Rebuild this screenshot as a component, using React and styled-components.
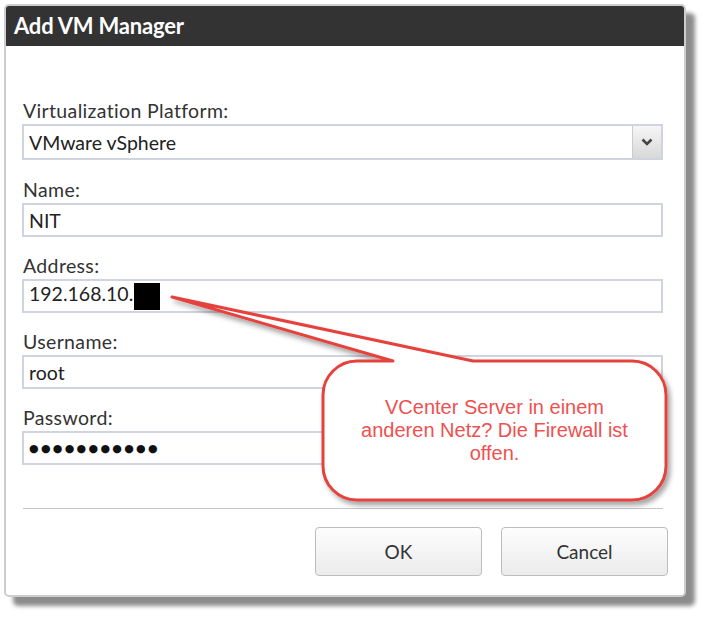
import React from "react"
import styled, { createGlobalStyle } from "styled-components"

const GlobalStyle = createGlobalStyle`
  body {
    margin: 0;
    background: #ffffff;
    font-family: Lato, "Open Sans", sans-serif;
  }
`

const Stage = styled.div`
  position: relative;
  width: 710px;
  height: 621px;
  padding: 4px 0 0 4px;
  box-sizing: border-box;
`

const Dialog = styled.div`
  width: 682px;
  height: 593px;
  box-sizing: border-box;
  border: 2px solid #cdcdcd;
  border-radius: 5px;
  background: #ffffff;
  box-shadow: 9px 9px 4px rgba(0, 0, 0, 0.45);
  display: flex;
  flex-direction: column;
  overflow: hidden;
`

const Header = styled.div`
  height: 40px;
  flex: none;
  background: #333333;
  color: #ffffff;
  font-family: Lato, sans-serif;
  font-weight: 700;
  font-size: 22px;
  line-height: 40px;
  padding-left: 8px;
  letter-spacing: -0.2px;
`

const Body = styled.div`
  padding: 52px 21px 0 16px;
`

const Field = styled.div`
  margin-bottom: ${p => (p.$first ? 17 : 16)}px;
`

const Label = styled.div`
  font-size: 19.5px;
  line-height: 22px;
  color: #333333;
  padding-top: 2px;
  margin-bottom: 2px;
  padding-left: 1px;
  letter-spacing: 0.35px;
`

const Input = styled.div`
  height: ${p => (p.$tall ? 36 : 34)}px;
  box-sizing: border-box;
  border: 2px solid #d0d3e0;
  display: flex;
  align-items: center;
  padding-left: 5px;
  font-size: 19.5px;
  color: #222222;
  background: #ffffff;
`

const Value = styled.span`
  flex: 1;
`

const Masked = styled.span`
  background: #000000;
  display: inline-block;
  width: 26px;
  height: 27px;
  vertical-align: middle;
  margin-left: 1px;
`

const Dots = styled.span`
  flex: 1;
  font-family: "DejaVu Sans", sans-serif;
  font-size: 11px;
  letter-spacing: 2.3px;
  color: #111111;
`

const DropButton = styled.div`
  width: 28px;
  align-self: stretch;
  border-left: 1px solid #c8cad6;
  background: linear-gradient(#f6f6f6, #d8d8d8);
  display: flex;
  align-items: center;
  justify-content: center;
`

const Separator = styled.div`
  margin: 27px 21px 0 17px;
  border-top: 1px solid #cbc6c6;
`

const Footer = styled.div`
  display: flex;
  justify-content: flex-end;
  gap: 19px;
  padding: 18px 16px 0 0;
`

const Button = styled.div`
  width: 167px;
  height: 49px;
  box-sizing: border-box;
  border: 1px solid #bdbdbd;
  border-radius: 4px;
  background: linear-gradient(#fdfdfd, #ebebeb);
  display: flex;
  align-items: center;
  justify-content: center;
  font-size: 19px;
  color: #333333;
`

const CalloutSvg = styled.svg`
  position: absolute;
  left: 0;
  top: 0;
  pointer-events: none;
`

const CalloutText = styled.div`
  position: absolute;
  left: 323px;
  top: 361px;
  width: 343px;
  height: 139px;
  display: flex;
  align-items: center;
  justify-content: center;
  text-align: center;
  font-family: "Liberation Sans", Arial, sans-serif;
  font-size: 20px;
  line-height: 23px;
  color: #ef5050;
`

const Chevron = () => (
  <svg width="12" height="8" viewBox="0 0 12 8">
    <path d="M1.5 1.5 L6 6 L10.5 1.5" fill="none" stroke="#454545" strokeWidth="2.6" />
  </svg>
)

const fields = [
  { label: "Name:", value: "NIT" },
  { label: "Address:", value: "192.168.10.", masked: true },
  { label: "Username:", value: "root" },
  { label: "Password:", password: true },
]

const bubblePath =
  "M 393 361 L 172 297 L 473 361 L 632 361 A 34 34 0 0 1 666 395 L 666 466 " +
  "A 34 34 0 0 1 632 500 L 357 500 A 34 34 0 0 1 323 466 L 323 395 A 34 34 0 0 1 357 361 Z"

const App = () => (
  <Stage>
    <GlobalStyle />
    <Dialog>
      <Header>Add VM Manager</Header>
      <Body>
        <Field $first>
          <Label>Virtualization Platform:</Label>
          <Input $tall>
            <Value>VMware vSphere</Value>
            <DropButton>
              <Chevron />
            </DropButton>
          </Input>
        </Field>
        {fields.map(f => (
          <Field key={f.label}>
            <Label>{f.label}</Label>
            <Input>
              {f.password ? (
                <Dots>●●●●●●●●●●●</Dots>
              ) : (
                <Value>
                  {f.value}
                  {f.masked && <Masked />}
                </Value>
              )}
            </Input>
          </Field>
        ))}
      </Body>
      <Separator />
      <Footer>
        <Button>OK</Button>
        <Button>Cancel</Button>
      </Footer>
    </Dialog>

    <CalloutSvg width="710" height="621" viewBox="0 0 710 621">
      <defs>
        <filter id="bubbleShadow" x="-10%" y="-10%" width="130%" height="130%">
          <feDropShadow dx="3" dy="4" stdDeviation="2.5" floodColor="#000" floodOpacity="0.35" />
        </filter>
      </defs>
      <path
        d={bubblePath}
        fill="#ffffff"
        stroke="#e5433c"
        strokeWidth="3"
        strokeLinejoin="round"
        filter="url(#bubbleShadow)"
      />
    </CalloutSvg>
    <CalloutText>
      VCenter Server in einem
      <br />
      anderen Netz? Die Firewall ist
      <br />
      offen.
    </CalloutText>
  </Stage>
)

export default App
